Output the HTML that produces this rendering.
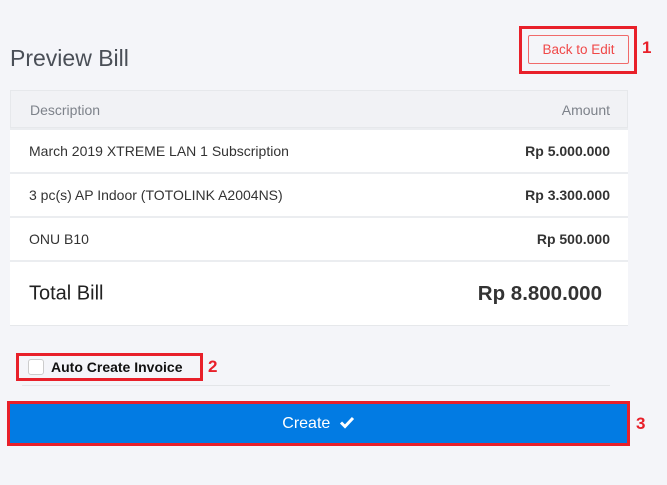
<!DOCTYPE html><html><head><style>
body{margin:0;width:667px;height:485px;background:#f4f5f9;font-family:"Liberation Sans",sans-serif;position:relative;overflow:hidden}
.a{position:absolute}
.red{position:absolute;border:3px solid #e8202a;box-sizing:border-box}
.num{position:absolute;color:#e8202a;font-weight:bold;font-size:17px}
.row{position:absolute;left:10px;width:618px;background:#fff;border-top:2px solid #ebedf0;box-sizing:border-box;font-size:14px;color:#333}
.row span{position:absolute;top:50%;transform:translateY(-50%)}
.l{left:19px}.r{right:18px;font-weight:bold}
</style></head><body>
<div class="a" style="left:10px;top:45px;font-size:23px;color:#4a4f57;font-weight:300">Preview Bill</div>
<div class="red" style="left:519px;top:26px;width:118px;height:48px"></div>
<div class="a" style="left:528px;top:35px;width:101px;height:29px;border:1px solid #f06a6a;border-radius:2px;box-sizing:border-box;color:#f04848;font-size:13.5px;text-align:center;line-height:27px">Back to Edit</div>
<div class="num" style="left:642px;top:38px">1</div>
<div class="a" style="left:10px;top:90px;width:618px;height:38px;background:#f1f2f5;border:1px solid #e6e8eb;box-sizing:border-box;color:#7d828a;font-size:14px">
<span class="a" style="left:19px;top:11px">Description</span><span class="a" style="right:17px;top:11px">Amount</span></div>
<div class="row" style="top:128px;height:44px"><span class="l">March 2019 XTREME LAN 1 Subscription</span><span class="r">Rp 5.000.000</span></div>
<div class="row" style="top:172px;height:44px"><span class="l">3 pc(s) AP Indoor (TOTOLINK A2004NS)</span><span class="r">Rp 3.300.000</span></div>
<div class="row" style="top:216px;height:44px"><span class="l">ONU B10</span><span class="r">Rp 500.000</span></div>
<div class="row" style="top:260px;height:66px;border-bottom:1px solid #e6e8eb"><span class="l" style="font-size:20px;color:#222">Total Bill</span><span class="r" style="font-size:20.5px;right:26px">Rp 8.800.000</span></div>
<div class="red" style="left:16px;top:353px;width:187px;height:28px"></div>
<div class="a" style="left:28px;top:359px;width:14px;height:14px;border:1px solid #ccc;border-radius:3px;background:#fff"></div>
<div class="a" style="left:51px;top:359px;font-size:14px;font-weight:bold;color:#111">Auto Create Invoice</div>
<div class="num" style="left:208px;top:357px">2</div>
<div class="a" style="left:22px;top:385px;width:588px;height:1px;background:#e3e5e8"></div>
<div class="red" style="left:7px;top:401px;width:623px;height:45px"></div>
<div class="a" style="left:10px;top:404px;width:617px;height:39px;background:#027be3;color:#fff;font-size:16px;text-align:center;line-height:40px">Create <svg width="16" height="14" viewBox="0 0 16 14" style="vertical-align:-1px;margin-left:4px"><path d="M2 7.5l4 4L14 3" stroke="#fff" stroke-width="3" fill="none"/></svg></div>
<div class="num" style="left:636px;top:414px">3</div>
</body></html>
